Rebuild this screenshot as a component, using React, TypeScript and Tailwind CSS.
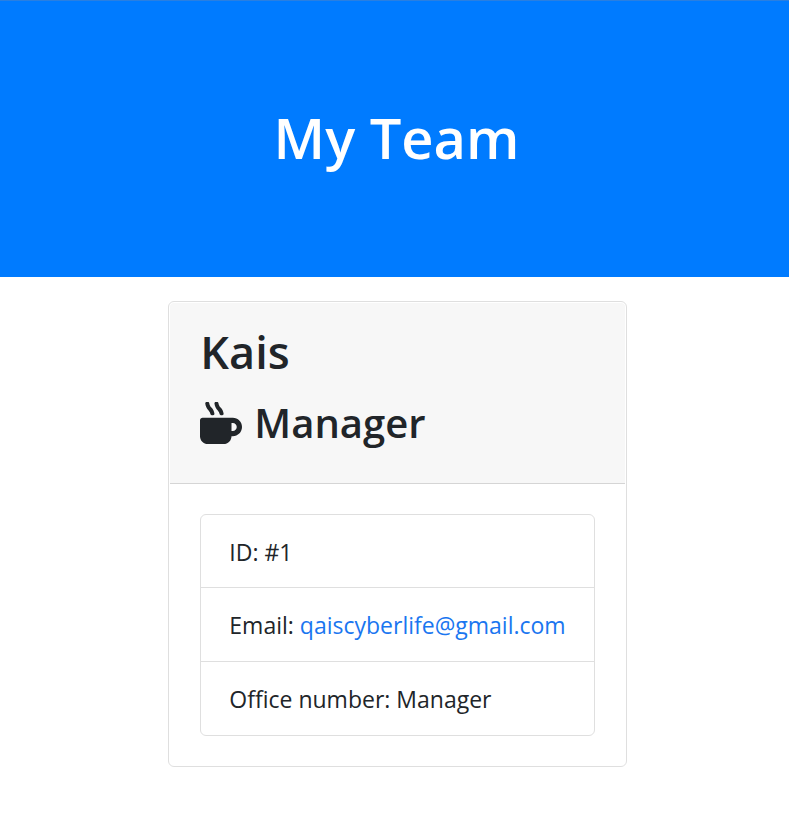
import { FaMugHot } from "react-icons/fa";

const rowClass = "border-b border-[#dfdfdf] px-7 pt-[19px] pb-[18px] first:pb-[17px] last:border-b-0";

export default function App() {
  return (
    <div className="bg-white font-['Open_Sans','Noto_Sans',sans-serif] text-[#212529]">
      <header className="border-t border-[#2a7fe0] bg-[#007bff] px-8 pt-[90px] pb-[94px] text-center">
        <h1 className="pl-1 text-[56px] leading-[92px] font-semibold text-white">My Team</h1>
      </header>
      <main className="flex justify-center px-4 pt-6 pl-[22px]">
        <section className="rounded-md border border-[#dfdfdf] bg-white p-px">
          <div className="rounded-t border-b border-[#d5d5d5] bg-[#f7f7f7] px-[30px] pt-[21px] pb-8">
            <h2 className="text-[45px] leading-[56px] font-semibold">Kais</h2>
            <h3 className="mt-[15px] flex items-center gap-3 text-[40px] leading-[56px] font-semibold">
              <FaMugHot className="size-[42px]" />
              Manager
            </h3>
          </div>
          <div className="px-[30px] pt-[30px] pb-[29px]">
            <ul className="rounded-md border border-[#dfdfdf] text-[23px] leading-9">
              <li className={rowClass}>ID: #1</li>
              <li className={rowClass}>
                Email:{" "}
                <a href="mailto:qaiscyberlife@gmail.com" className="text-[#1a76f0]">
                  qaiscyberlife@gmail.com
                </a>
              </li>
              <li className={rowClass}>Office number: Manager</li>
            </ul>
          </div>
        </section>
      </main>
    </div>
  );
}
